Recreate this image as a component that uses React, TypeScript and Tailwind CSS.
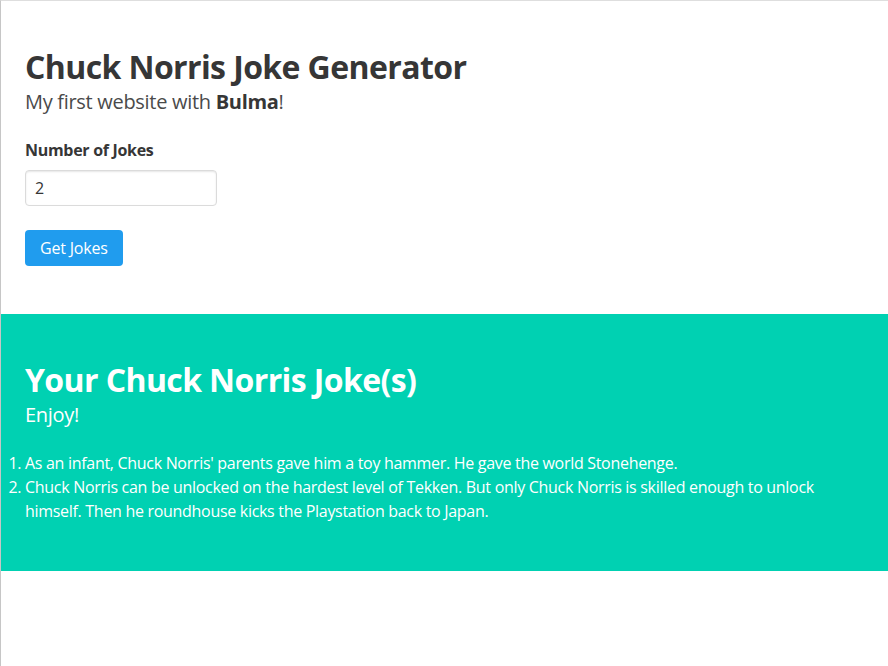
export default function App() {
  return (
    <div
      className="min-h-[666px] border-l border-t border-l-[#c6c6c6] border-t-[#dedede] bg-white"
      style={{ fontFamily: '"Open Sans", sans-serif' }}
    >
      <section className="px-6 py-12">
        <h1 className="text-[32px] font-bold leading-9 tracking-[-0.6px] text-[#363636]">Chuck Norris Joke Generator</h1>
        <p className="mt-1 text-[20px] leading-[25px] tracking-[-0.3px] text-[#4a4a4a]">
          My first website with <strong className="font-bold text-[#363636]">Bulma</strong>!
        </p>
        <div className="mt-6">
          <label className="block text-[16px] font-bold leading-6 tracking-[-0.3px] text-[#363636]">Number of Jokes</label>
          <input
            type="number"
            defaultValue={2}
            className="mt-2 block h-9 w-[192px] rounded border border-[#dbdbdb] bg-white pl-[9px] text-[16px] text-[#363636] shadow-[inset_0_1px_2px_rgba(10,10,10,0.1)] outline-none [appearance:textfield] [&::-webkit-inner-spin-button]:appearance-none"
          />
        </div>
        <button className="mt-6 flex h-9 items-center rounded bg-[#209cee] px-[15px] text-[16px] tracking-[-0.2px] text-white">
          Get Jokes
        </button>
      </section>
      <section className="bg-[#00d1b2] py-12 text-white">
        <div className="px-6">
          <h2 className="text-[32px] font-bold leading-9 tracking-[-0.6px]">Your Chuck Norris Joke(s)</h2>
          <p className="mt-1 text-[20px] leading-[25px] tracking-[-0.3px]">Enjoy!</p>
        </div>
        <ol className="mt-6 list-decimal pl-6 pr-12 text-[16px] leading-6 tracking-[-0.3px]">
          <li>As an infant, Chuck Norris' parents gave him a toy hammer. He gave the world Stonehenge.</li>
          <li>
            Chuck Norris can be unlocked on the hardest level of Tekken. But only Chuck Norris is skilled enough to unlock
            himself. Then he roundhouse kicks the Playstation back to Japan.
          </li>
        </ol>
      </section>
    </div>
  );
}
